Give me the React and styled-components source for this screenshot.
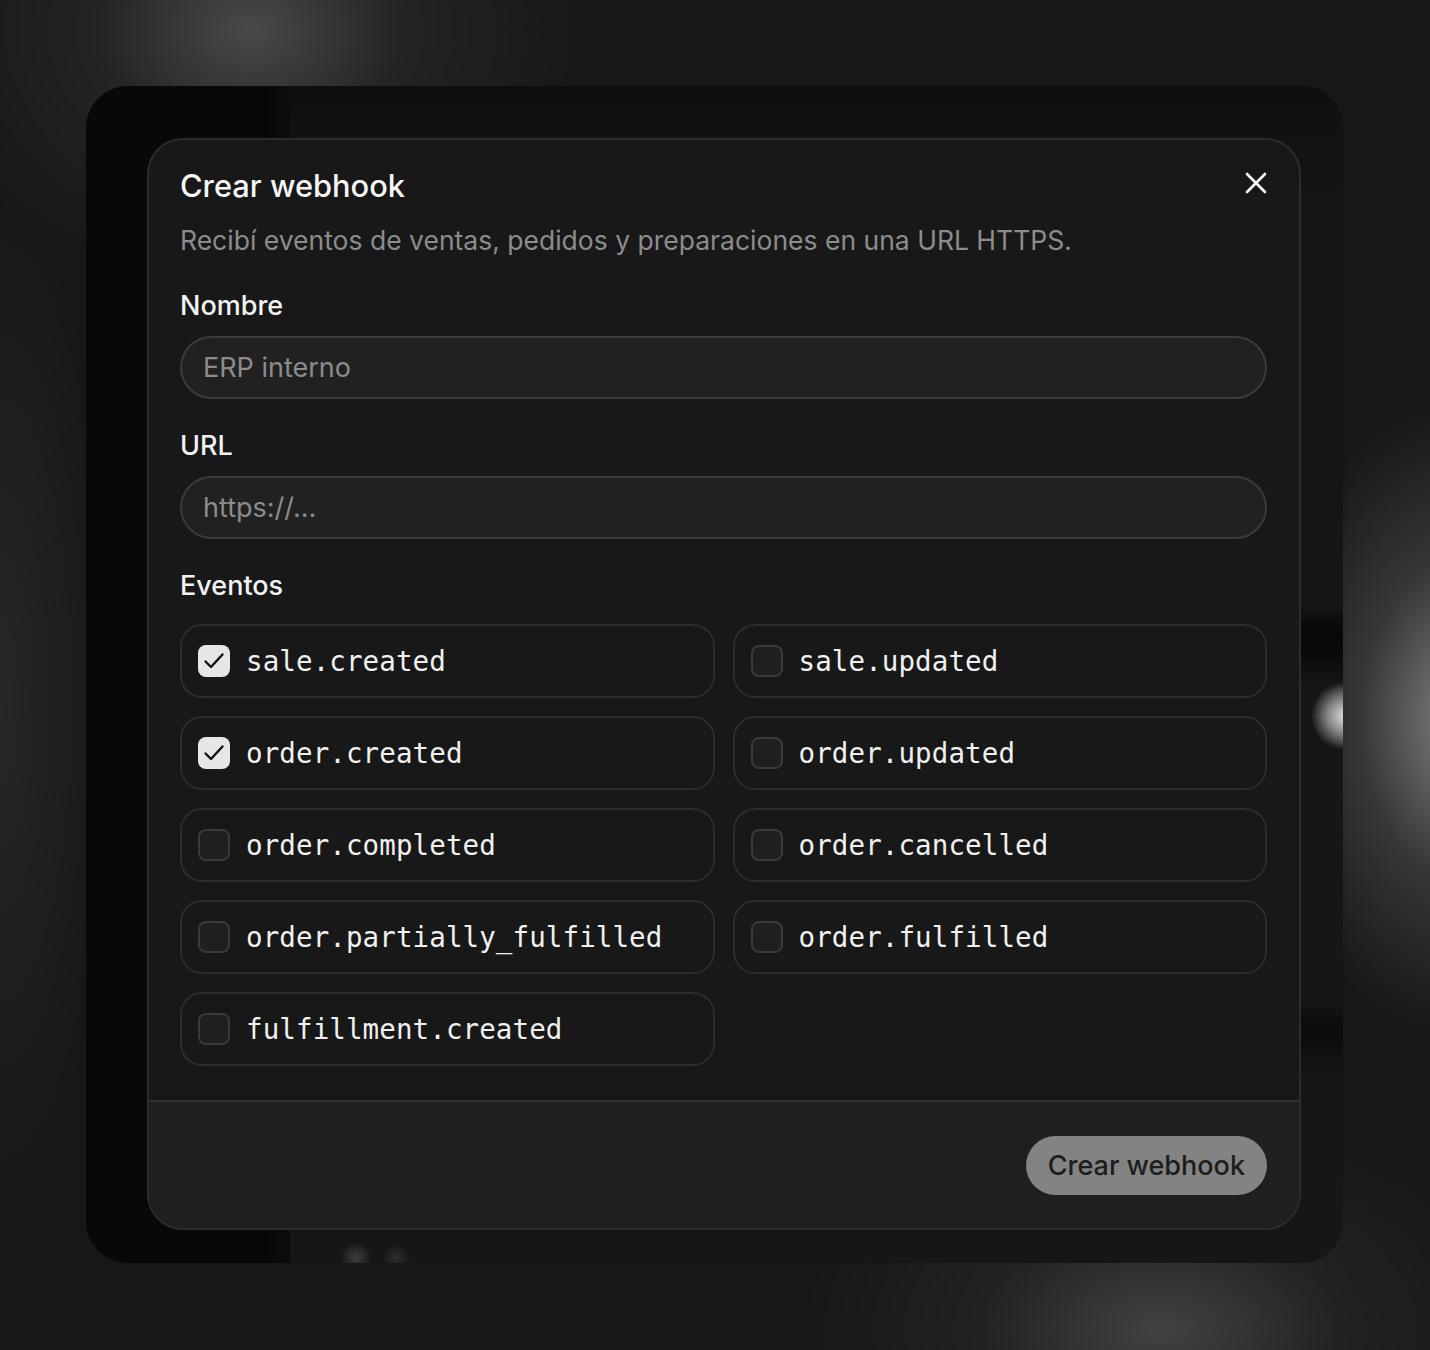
import { useState } from "react";
import styled, { createGlobalStyle } from "styled-components";

const EVENTS = [
  "sale.created",
  "sale.updated",
  "order.created",
  "order.updated",
  "order.completed",
  "order.cancelled",
  "order.partially_fulfilled",
  "order.fulfilled",
  "fulfillment.created",
];

const GlobalStyle = createGlobalStyle`
  html, body {
    margin: 0;
    padding: 0;
  }
  body {
    min-height: 1350px;
    font-family: Inter, "Noto Sans", sans-serif;
    background-color: #171717;
    background-image:
      radial-gradient(ellipse 340px 260px at 250px 30px, rgba(90, 90, 90, 0.75) 0, rgba(60, 60, 60, 0.35) 45%, rgba(23, 23, 23, 0) 100%),
      radial-gradient(ellipse 200px 320px at 1460px 720px, rgba(135, 135, 135, 0.95) 0, rgba(85, 85, 85, 0.5) 50%, rgba(23, 23, 23, 0) 100%),
      radial-gradient(ellipse 360px 220px at 1160px 1330px, rgba(80, 80, 80, 0.75) 0, rgba(55, 55, 55, 0.35) 50%, rgba(23, 23, 23, 0) 100%),
      radial-gradient(ellipse 120px 500px at 0px 700px, rgba(50, 50, 50, 0.6) 0, rgba(23, 23, 23, 0) 100%);
  }
`;

export default function App() {
  const [checked, setChecked] = useState(["sale.created", "order.created"]);

  const toggle = (name) =>
    setChecked((list) =>
      list.includes(name) ? list.filter((n) => n !== name) : [...list, name]
    );

  return (
    <>
      <GlobalStyle />
      <Stage>
        <Window>
          <Sidebar />
          <MainArea />
          <Modal>
            <Body>
              <Header>
                <Title>Crear webhook</Title>
                <CloseButton aria-label="Cerrar">
                  <svg width="22" height="22" viewBox="0 0 22 22" fill="none">
                    <path
                      d="M2 2L20 20M20 2L2 20"
                      stroke="#fff"
                      strokeWidth="2.6"
                      strokeLinecap="round"
                    />
                  </svg>
                </CloseButton>
              </Header>
              <Subtitle>
                Recibí eventos de ventas, pedidos y preparaciones en una URL HTTPS.
              </Subtitle>

              <Label>Nombre</Label>
              <Input placeholder="ERP interno" />

              <Label $gap={32}>URL</Label>
              <Input placeholder="https://..." />

              <Label $gap={32}>Eventos</Label>
              <EventGrid>
                {EVENTS.map((name) => {
                  const on = checked.includes(name);
                  return (
                    <EventCell key={name} onClick={() => toggle(name)}>
                      <Box $on={on}>
                        {on && (
                          <svg width="26" height="26" viewBox="0 0 26 26" fill="none">
                            <path
                              d="M4.5 13.5L10 19L21.5 6.5"
                              stroke="#111"
                              strokeWidth="2.4"
                              strokeLinecap="round"
                              strokeLinejoin="round"
                            />
                          </svg>
                        )}
                      </Box>
                      <EventName>{name}</EventName>
                    </EventCell>
                  );
                })}
              </EventGrid>
            </Body>
            <Footer>
              <SubmitButton>Crear webhook</SubmitButton>
            </Footer>
          </Modal>
        </Window>
      </Stage>
    </>
  );
}

const Stage = styled.div`
  padding: 86px 87px 87px 86px;
`;

const Window = styled.div`
  position: relative;
  height: 1177px;
  border-radius: 42px;
  overflow: hidden;
  display: grid;
  grid-template-columns: 204px 1fr;
  background: #0d0d0d;
`;

const Sidebar = styled.div`
  background: linear-gradient(90deg, #080808 0, #080808 180px, #0c0c0c 204px);
`;

const MainArea = styled.div`
  background-color: #151515;
  background-image:
    radial-gradient(circle at 1055px 630px, rgba(235, 235, 235, 0.95) 0, rgba(200, 200, 200, 0.6) 18px, rgba(21, 21, 21, 0) 34px),
    radial-gradient(circle at 66px 1172px, rgba(90, 90, 90, 0.6) 0, rgba(21, 21, 21, 0) 16px),
    radial-gradient(circle at 106px 1172px, rgba(70, 70, 70, 0.5) 0, rgba(21, 21, 21, 0) 14px),
    linear-gradient(180deg, #0e0e0e 0, #121212 52px, #151515 110px, #151515 520px, #090909 540px, #090909 565px, #161616 600px, #161616 915px, #0d0d0d 935px, #0d0d0d 955px, #161616 990px);
`;

const Modal = styled.div`
  position: absolute;
  left: 61px;
  top: 52px;
  width: 1154px;
  height: 1092px;
  box-sizing: border-box;
  display: flex;
  flex-direction: column;
  background: #181818;
  border: 2px solid #2c2c2c;
  border-radius: 36px;
  overflow: hidden;
`;

const Body = styled.div`
  flex: 1;
  padding: 28px 32px 0 31px;
  display: flex;
  flex-direction: column;
`;

const Header = styled.div`
  display: flex;
  align-items: center;
  justify-content: space-between;
`;

const Title = styled.h2`
  margin: 0;
  font-size: 30.8px;
  line-height: 36px;
  font-weight: 500;
  color: #f6f6f6;
`;

const CloseButton = styled.button`
  width: 22px;
  height: 22px;
  padding: 0;
  margin-top: -6px;
  border: 0;
  background: transparent;
  display: flex;
  align-items: center;
  justify-content: center;
  cursor: pointer;
`;

const Subtitle = styled.p`
  margin: 21px 0 0;
  font-size: 26.5px;
  line-height: 30px;
  color: #8c8c8c;
`;

const Label = styled.label`
  display: block;
  margin-top: ${(p) => p.$gap ?? 36}px;
  font-size: 27px;
  line-height: 30px;
  font-weight: 500;
  color: #f2f2f2;
`;

const Input = styled.input`
  box-sizing: border-box;
  width: 100%;
  height: 63px;
  margin-top: 15px;
  padding: 0 21px;
  border: 2px solid #3b3b3b;
  border-radius: 32px;
  background: #212121;
  color: #eee;
  font-family: Inter, "Noto Sans", sans-serif;
  font-size: 27px;
  outline: none;

  &::placeholder {
    color: #8c8c8c;
  }
`;

const EventGrid = styled.div`
  margin-top: 23px;
  display: grid;
  grid-template-columns: 1fr 1fr;
  grid-auto-rows: 74px;
  gap: 18px;
`;

const EventCell = styled.div`
  box-sizing: border-box;
  display: flex;
  align-items: center;
  gap: 16px;
  padding-left: 16px;
  border: 2px solid #2d2d2d;
  border-radius: 22px;
  cursor: pointer;
`;

const Box = styled.span`
  box-sizing: border-box;
  width: 32px;
  height: 32px;
  flex-shrink: 0;
  border-radius: 8px;
  display: flex;
  align-items: center;
  justify-content: center;
  background: ${(p) => (p.$on ? "#e6e6e6" : "#1f1f1f")};
  border: ${(p) => (p.$on ? "none" : "2px solid #3a3a3a")};
`;

const EventName = styled.span`
  font-family: "DejaVu Sans Mono", "Liberation Mono", monospace;
  font-size: 27.5px;
  color: #f0f0f0;
  letter-spacing: 0.1px;
`;

const Footer = styled.div`
  height: 128px;
  flex-shrink: 0;
  box-sizing: border-box;
  border-top: 2px solid #333;
  background: #1f1f1f;
  display: flex;
  align-items: center;
  justify-content: flex-end;
  padding-right: 32px;
`;

const SubmitButton = styled.button`
  height: 59px;
  padding: 0 22px;
  border: 0;
  border-radius: 30px;
  background: #838383;
  color: #1d1d1d;
  font-family: Inter, "Noto Sans", sans-serif;
  font-size: 27px;
  font-weight: 500;
  cursor: pointer;
`;
